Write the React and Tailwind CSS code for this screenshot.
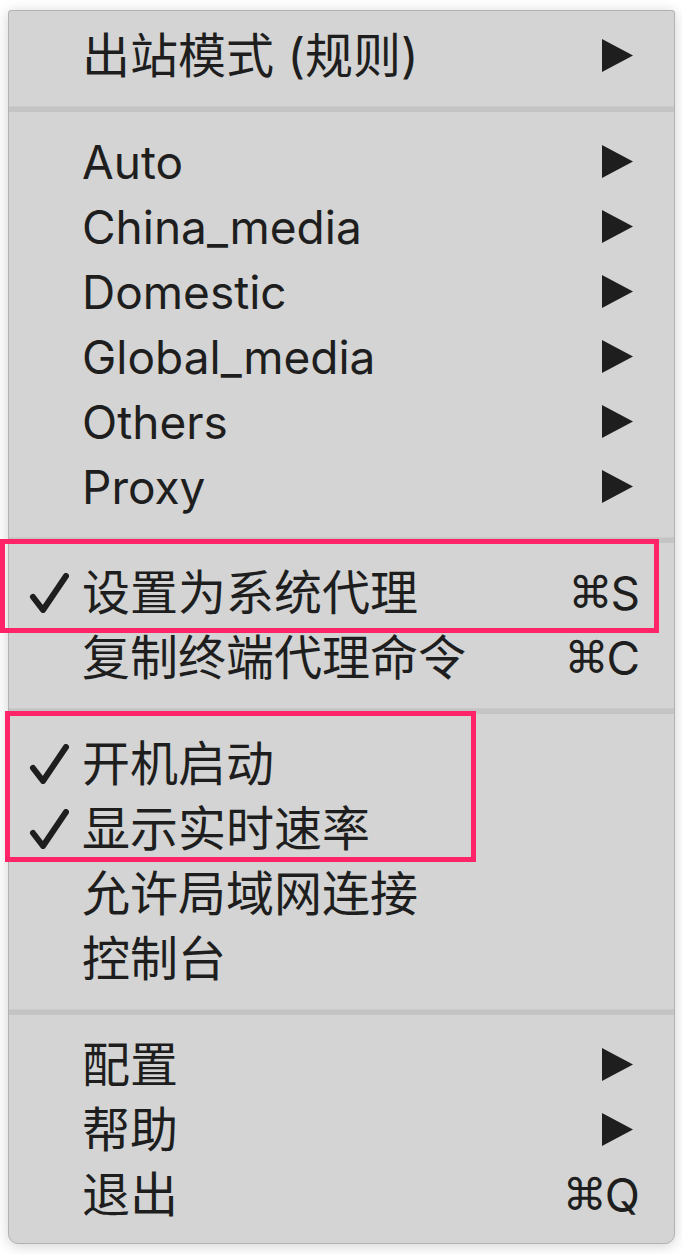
import React from 'react';

// Tray menu of a proxy client, with two highlighted groups drawn over it.

const sections = [
  [{ label: '出站模式 (规则)', sub: true }],
  [
    { label: 'Auto', sub: true, latin: true },
    { label: 'China_media', sub: true, latin: true },
    { label: 'Domestic', sub: true, latin: true },
    { label: 'Global_media', sub: true, latin: true },
    { label: 'Others', sub: true, latin: true },
    { label: 'Proxy', sub: true, latin: true },
  ],
  [
    { label: '设置为系统代理', checked: true, key: 'S' },
    { label: '复制终端代理命令', key: 'C' },
  ],
  [
    { label: '开机启动', checked: true },
    { label: '显示实时速率', checked: true },
    { label: '允许局域网连接' },
    { label: '控制台' },
  ],
  [
    { label: '配置', sub: true },
    { label: '帮助', sub: true },
    { label: '退出', key: 'Q' },
  ],
];

const Check = () => (
  <svg width="40" height="40" viewBox="0 0 40 40" className="ml-[20px]">
    <path d="M4 24 L14 37 L37 3" fill="none" stroke="#1e1e1e" strokeWidth="6" strokeLinecap="round" strokeLinejoin="round" />
  </svg>
);

const Arrow = () => (
  <svg width="31" height="33" viewBox="0 0 31 33" className="mr-[7px]">
    <polygon points="0,0 31,16.5 0,33" fill="#1e1e1e" />
  </svg>
);

function Row({ item }) {
  return (
    <div className="flex items-center h-[65px] pr-[34px]">
      <div className="w-[73px] flex items-center">{item.checked && <Check />}</div>
      <div className={`flex-1 leading-none text-[#1e1e1e] ${item.latin ? 'text-[46px]' : 'text-[48px]'}`}>
        {item.label}
      </div>
      {item.sub && <Arrow />}
      {item.key && (
        <div className="flex items-center text-[46px] leading-none text-[#1e1e1e]">
          <span className="font-['DejaVu_Sans',sans-serif] text-[44px] -mr-[2px]">⌘</span>
          {item.key}
        </div>
      )}
    </div>
  );
}

export default function App() {
  return (
    <div className="relative min-h-[1254px] bg-white pt-[10px] pl-[8px] font-['Inter','Noto_Sans_CJK_SC',sans-serif]">
      <div className="w-[667px] bg-[#d3d4d3] border border-[#b2b2b2] rounded-t-[3px] rounded-b-[10px] shadow-[0_2px_14px_rgba(0,0,0,0.18)] pt-[12px] pb-[16px]">
        {sections.map((items, si) => (
          <div key={si}>
            {si > 0 && (
              <div className="pt-[18px] pb-[17px]">
                <div className="h-[6px] bg-[#c3c4c3] border-t border-[#cacaca]" />
              </div>
            )}
            {items.map((item) => (
              <Row key={item.label} item={item} />
            ))}
          </div>
        ))}
      </div>

      {/* highlight boxes */}
      <div className="absolute left-0 top-[539px] w-[659px] h-[94px] border-[5px] border-[#ff2368]" />
      <div className="absolute left-[5px] top-[711px] w-[471px] h-[151px] border-[5px] border-[#ff2368]" />
    </div>
  );
}
